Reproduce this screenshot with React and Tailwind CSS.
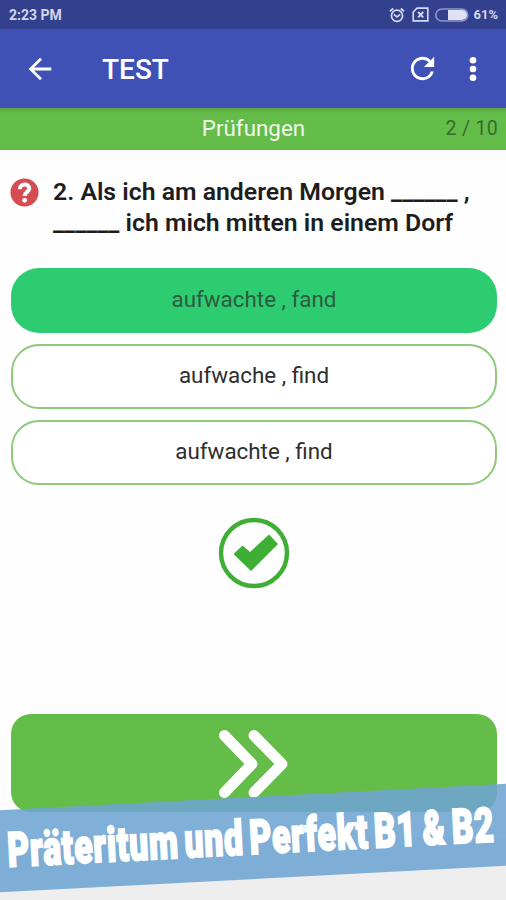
import React from 'react';
import { MdArrowBack, MdRefresh } from 'react-icons/md';

const answers = [
    { text: 'aufwachte , fand', correct: true },
    { text: 'aufwache , find', correct: false },
    { text: 'aufwachte , find', correct: false },
];

function StatusBar() {
    return (
        <div className="flex h-[29px] items-center justify-between bg-[#33408d] pl-[9px] pr-[8px] text-[14px] font-bold text-[#d3d7ee]">
            <span className="pt-px leading-none">2:23 PM</span>
            <div className="flex items-center">
                {/* Alarm */}
                <svg width="16" height="16" viewBox="0 0 16 16" fill="none" stroke="currentColor" className="mr-[7px]">
                    <circle cx="8" cy="8.8" r="5.6" strokeWidth="1.7" />
                    <path d="M1 4.2L4.2 1.5M15 4.2L11.8 1.5" strokeWidth="1.9" />
                    <path d="M4.8 7.3L8 10L11.2 7.3" strokeWidth="1.7" />
                </svg>
                {/* No sim */}
                <svg width="17" height="15" viewBox="0 0 17 15" fill="none" stroke="currentColor" className="mr-[6px]">
                    <path d="M5 1.2H15.8V13.8H1.2V5Z" strokeWidth="1.7" />
                    <path d="M6.2 5L11.2 10.4M11.2 5L6.2 10.4" strokeWidth="1.9" />
                </svg>
                {/* Battery */}
                <svg width="34" height="14" viewBox="0 0 34 14" fill="none" className="mr-[4px]">
                    <rect x="0.8" y="1" width="32" height="12" rx="6" stroke="#8f98cd" strokeWidth="1.6" />
                    <path d="M13 2H27A5 5 0 0 1 27 12H13Z" fill="#dfe2f3" />
                </svg>
                <span className="text-[13px] leading-none">61%</span>
            </div>
        </div>
    );
}

function AppBar() {
    return (
        <div className="flex h-[79px] items-center bg-[#3f51b5] pl-[23px] pr-[18px] text-white">
            <MdArrowBack size={34} />
            <h1 className="ml-[45px] pt-[2px] text-[28px] font-medium leading-none">TEST</h1>
            <div className="ml-auto flex items-center">
                <MdRefresh size={35} className="mr-[18px]" />
                <svg width="30" height="30" viewBox="0 0 30 30" fill="currentColor">
                    <circle cx="15" cy="6.3" r="3.3" />
                    <circle cx="15" cy="15" r="3.3" />
                    <circle cx="15" cy="23.7" r="3.3" />
                </svg>
            </div>
        </div>
    );
}

export default function App() {
    return (
        <div className="relative flex h-[900px] w-[506px] flex-col overflow-hidden bg-[#fefefe] font-['Roboto',sans-serif]">
            <StatusBar />
            <AppBar />

            {/* Section title */}
            <div className="grid h-[42px] grid-cols-[1fr_auto_1fr] items-center bg-linear-to-b from-[#58a244] to-[#64bc49] to-[5px] pl-[9px] pr-[8px] pb-px">
                <span />
                <span className="text-[22.4px] leading-none text-[#f0f9ec]">Prüfungen</span>
                <span className="text-right text-[19.5px] leading-none tracking-[0.3px] text-[#3a6a2d]">2 / 10</span>
            </div>

            {/* Question */}
            <div className="mt-[26px] flex px-[10px]">
                <svg width="29" height="29" viewBox="0 0 29 29" className="mt-[2px] shrink-0">
                    <circle cx="14.5" cy="14.5" r="14" fill="#d54d52" />
                    <path d="M9.8 11.2C9.8 5 19.3 5.2 19.3 10.6C19.3 14 14.6 13.7 14.6 18" fill="none" stroke="#fff" strokeWidth="4" />
                    <circle cx="14.6" cy="22.3" r="2.4" fill="#fff" />
                </svg>
                <p className="ml-[14px] whitespace-nowrap text-[24.8px] font-semibold leading-[31px] text-[#1d1d1d]">
                    2. Als ich am anderen Morgen ______ ,<br />
                    ______ ich mich mitten in einem Dorf
                </p>
            </div>

            {/* Answers */}
            <div className="mt-[30px] flex flex-col gap-[11px] pl-[11px] pr-[9px]">
                {answers.map((answer) => (
                    <button
                        key={answer.text}
                        className={
                            answer.correct
                                ? 'h-[65px] rounded-[28px] bg-[#2ecc71] pb-[2px] text-[22.4px] text-[#2c5b40]'
                                : 'h-[65px] rounded-[28px] border-2 border-[#8fc97c] bg-white pb-[2px] text-[22.4px] text-[#2e2e2e]'
                        }
                    >
                        {answer.text}
                    </button>
                ))}
            </div>

            {/* Result */}
            <svg width="72" height="72" viewBox="0 0 72 72" className="ml-[218px] mt-[32px] shrink-0">
                <circle cx="36" cy="36" r="33" fill="none" stroke="#3fae35" strokeWidth="4.4" />
                <path d="M15.5 37L24.5 28.5L32 35L51 17.5L60 27L33 54Z" fill="#3fae35" />
            </svg>

            {/* Next */}
            <button className="ml-[11px] mr-[9px] mt-[125px] flex h-[98px] shrink-0 justify-center rounded-[20px] bg-[#64bc49] pt-[15px]">
                <svg width="72" height="70" viewBox="0 0 72 70" fill="none" stroke="#fff" strokeWidth="11" strokeLinecap="round" strokeLinejoin="round">
                    <path d="M6.5 6.5L34 35L6.5 63.5" />
                    <path d="M36 6.5L64 35L36 63.5" />
                </svg>
            </button>
            <div className="mt-[26px] flex-1 bg-[#eee]" />

            {/* Tilted banner over the bottom of the screen */}
            <div className="absolute left-[-20px] top-[797px] flex h-[82px] w-[546px] rotate-[-3deg] items-center bg-[#6ea4d2]/88 pl-[27px]">
                <span className="origin-left scale-x-[0.7] whitespace-nowrap text-[48px] font-black leading-none tracking-[1.2px] text-white [-webkit-text-stroke:2px_#fff] [word-spacing:-5px]">
                    Präteritum und Perfekt B1 &amp; B2
                </span>
            </div>
        </div>
    );
}
